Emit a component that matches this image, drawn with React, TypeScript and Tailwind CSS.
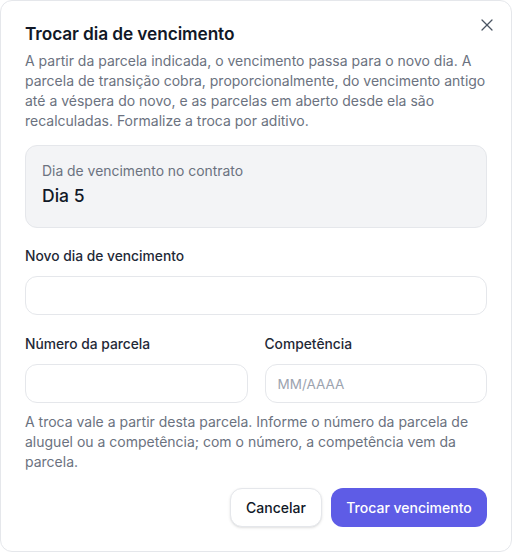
import React, { useState } from 'react';
import { X } from 'lucide-react';

const font = { fontFamily: 'Inter, "Noto Sans", sans-serif' };

export default function App() {
  const [novoDia, setNovoDia] = useState('');
  const [parcela, setParcela] = useState('');
  const [competencia, setCompetencia] = useState('');

  return (
    <div style={font} className="w-[512px] h-[552px] bg-white">
      <div className="relative h-full border border-[#e5e7eb] rounded-xl bg-white px-6 pt-[21px] pb-6 flex flex-col">
        {/* close */}
        <button className="absolute top-[14px] right-[14px] text-[#4b5563]">
          <X className="w-5 h-5" strokeWidth={1.5} />
        </button>

        <h2 className="text-[17.3px] leading-6 font-semibold text-[#111827] tracking-[-0.1px]">
          Trocar dia de vencimento
        </h2>
        <p className="mt-[5px] text-[14px] leading-5 text-[#6b7280]">
          A partir da parcela indicada, o vencimento passa para o novo dia. A parcela de transição cobra, proporcionalmente, do vencimento antigo até a véspera do novo, e as parcelas em aberto desde ela são recalculadas. Formalize a troca por aditivo.
        </p>

        {/* current due day */}
        <div className="mt-[14px] rounded-xl border border-[#e5e7eb] bg-[#f3f4f6] px-4 pt-4 pb-[19px]">
          <div className="text-[13.9px] leading-[18px] text-[#6b7280]">Dia de vencimento no contrato</div>
          <div className="mt-[4px] text-[17.5px] leading-6 font-medium text-[#111827]">Dia 5</div>
        </div>

        <label className="mt-[18px] text-[13.8px] leading-5 font-medium text-[#1f2937]">
          Novo dia de vencimento
        </label>
        <input
          value={novoDia}
          onChange={(e) => setNovoDia(e.target.value)}
          className="mt-[10px] h-[39px] w-full rounded-xl border border-[#e5e7eb] bg-white px-3 text-[13.5px] outline-none"
        />

        <div className="mt-[19px] grid grid-cols-2 gap-[17px]">
          <div className="flex flex-col">
            <label className="text-[13.8px] leading-5 font-medium text-[#1f2937]">Número da parcela</label>
            <input
              value={parcela}
              onChange={(e) => setParcela(e.target.value)}
              className="mt-[10px] h-[39px] w-full rounded-xl border border-[#e5e7eb] bg-white px-3 text-[13.5px] outline-none"
            />
          </div>
          <div className="flex flex-col">
            <label className="text-[13.8px] leading-5 font-medium text-[#1f2937]">Competência</label>
            <input
              value={competencia}
              placeholder="MM/AAAA"
              onChange={(e) => setCompetencia(e.target.value)}
              className="mt-[10px] h-[39px] w-full rounded-xl border border-[#e5e7eb] bg-white px-3 text-[13.5px] outline-none placeholder:text-[#9ca3af]"
            />
          </div>
        </div>

        <p className="mt-[9px] text-[14px] leading-5 text-[#6b7280]">
          A troca vale a partir desta parcela. Informe o número da parcela de aluguel ou a competência; com o número, a competência vem da parcela.
        </p>

        <div className="mt-4 flex justify-end gap-[9px]">
          <button className="h-[39px] w-[92px] rounded-xl border border-[#e5e7eb] bg-white text-[14px] font-medium text-[#111827] shadow-sm">
            Cancelar
          </button>
          <button className="h-[39px] w-[156px] rounded-xl bg-[#5e5ce6] text-[14px] font-medium text-white">
            Trocar vencimento
          </button>
        </div>
      </div>
    </div>
  );
}
